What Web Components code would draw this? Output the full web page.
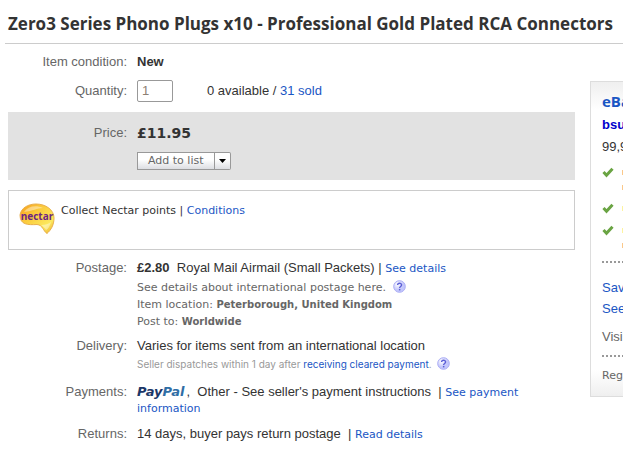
<!DOCTYPE html>
<html lang="en">
<head>
<meta charset="utf-8">
<title>Zero3 Series Phono Plugs x10</title>
<style>
html { overflow-x: hidden; }
body { margin: 0; background: #fff; color: #333; font: 13px/16px "Liberation Sans", Arial, sans-serif; }
</style>
</head>
<body>
<item-page></item-page>
<script>
const define = (name, html, setup) => {
  const t = document.createElement('template');
  t.innerHTML = html;
  customElements.define(name, class extends HTMLElement {
    constructor() {
      super();
      this.attachShadow({ mode: 'open' }).append(t.content.cloneNode(true));
    }
    connectedCallback() { if (setup) setup(this, this.shadowRoot); }
  });
};

define('item-row', `
<style>
:host { display: grid; grid-template-columns: 119px 1fr; column-gap: 10px; }
.label { text-align: right; color: #666; line-height: var(--label-height, 16px); }
</style>
<div class="label"><slot name="label"></slot></div>
<div><slot></slot></div>`);

define('text-link', `
<style>
:host { display: inline; }
a { color: #1a56c4; text-decoration: none; }
</style>
<a href="#"><slot></slot></a>`);

define('help-icon', `
<style>
:host { display: inline-block; vertical-align: -2px; margin-left: 4px; }
a, svg { display: block; }
</style>
<a href="#" aria-label="Help"><svg width="13" height="13" viewBox="0 0 13 13">
<defs><radialGradient id="g" cx=".35" cy=".3"><stop offset="0" stop-color="#fff"/><stop offset="1" stop-color="#c3c6fb"/></radialGradient></defs>
<circle cx="6.5" cy="6.5" r="5.8" fill="url(#g)" stroke="#a9abf5"/>
<path d="M4.6 5.1c0-2.5 4-2.5 4 0 0 1.4-2 1.4-2 3" fill="none" stroke="#5c5fd6" stroke-width="1.4"/><rect x="5.9" y="8.9" width="1.5" height="1.5" fill="#5c5fd6"/></svg></a>`);

define('nectar-logo', `
<style>:host { display: block; } svg { display: block; }
text { font: bold 10px "Open Sans", sans-serif; fill: #6b2583; }</style>
<svg width="36" height="32" viewBox="0 0 36 32">
<defs><linearGradient id="n" x1="0" y1="0" x2="1" y2="1"><stop offset="0" stop-color="#f59a1c"/><stop offset=".35" stop-color="#fbc93a"/><stop offset=".75" stop-color="#fce95e"/><stop offset="1" stop-color="#eda929"/></linearGradient></defs>
<path d="M1 12C2 5 9 1 17 1c10 0 18 6 18 14 0 7-3 12-7 15.500C24 28 24 22 18 21.500 9 22 1 22 1 12Z" fill="url(#n)" stroke="#e9b04c"/>
<path d="M5 9C9 3 17 2 24 5 18 5 14 8 5 9ZM22 22c4 0 8-1 10-3-1 4-3 7-5 8-1-2-3-4-5-5Z" fill="#fff" opacity=".4"/>
<text x="18" y="17" text-anchor="middle">nectar</text></svg>`);

define('paypal-logo', `
<style>:host { display: inline-block; margin-right: 2px; font: italic bold 13px/12px "DejaVu Sans", Verdana, sans-serif; color: #1c3768; }
span { color: #2f6ea5; }</style>Pay<span>Pal</span>`);

define('split-button', `
<style>
:host { display: inline-flex; vertical-align: top; }
button { box-sizing: border-box; height: 18px; margin: 0; padding: 0 10px; border: 1px solid #999; background: linear-gradient(#fff 40%, #dcdee2); color: #666; font: 11px/14px "DejaVu Sans", Verdana, sans-serif; }
.more { width: 16px; padding: 0; border-left: 0; border-radius: 0 2px 2px 0; display: grid; place-items: center; }
</style>
<button><slot></slot></button><button class="more" aria-label="More options"><svg width="7" height="4"><path d="M0 0h7L3.500 4z" fill="#000"/></svg></button>`);

define('nectar-box', `
<style>
:host { display: flex; box-sizing: border-box; min-height: 60px; margin: 10px 0; padding: 12px 10px; border: 1px solid #ccc; gap: 6px; font: 11px/16px "DejaVu Sans", Verdana, sans-serif; }
</style>
<nectar-logo></nectar-logo><div><slot></slot></div>`);

define('check-line', `
<style>
:host { display: flex; justify-content: space-between; }
svg { margin-top: 3px; }
.edge { width: 1px; display: grid; gap: 10px; align-content: start; padding-top: 6px; }
i { height: 5px; background: #fdf3a0; }
:host([tone=orange]) i, i + i { background: #fbc88a; }
</style>
<svg width="12" height="11" viewBox="0 0 12 11"><path d="M1.500 5 4.500 8.200 10.500 1.800" fill="none" stroke="#6aa443" stroke-width="3"/></svg><div class="edge"><i></i></div>`,
(el, root) => {
  if (el.hasAttribute('double')) root.querySelector('.edge').append(document.createElement('i'));
});

define('seller-panel', `
<style>
:host { display: block; box-sizing: border-box; overflow: hidden; white-space: nowrap; border: 1px solid #ddd; border-right: 0; padding: 10px 0 12px 11px; background: linear-gradient(#efefef, #fff 28px, #fff 288px, #efefef); }
h2 { margin: 0; font: bold 15px/18px "Open Sans", sans-serif; color: #1a56c4; }
.name { line-height: 16px; margin: 7px 0 6px; font-weight: bold; }
.name a { color: #0000cc; text-decoration: none; }
.checks { display: grid; grid-template-rows: 36px 22px 20px; margin-top: 9px; }
hr { margin: 19px 0 17px; border: 0; height: 2px; background: repeating-linear-gradient(90deg, #999 0 2px, transparent 2px 4px); }
.links { display: grid; gap: 5px; }
.visit { margin-top: 12px; color: #666; }
.visit + hr { margin: 10px 0 11px; }
.reg { font: 11px/16px "DejaVu Sans", Verdana, sans-serif; color: #666; }
</style>
<h2>eBa</h2>
<div class="name"><a href="#">bsu</a></div>
<div>99,9</div>
<div class="checks"><check-line tone="orange" double></check-line><check-line></check-line><check-line double></check-line></div>
<hr>
<div class="links"><text-link>Sav</text-link><text-link>See</text-link></div>
<div class="visit">Visi</div>
<hr>
<div class="reg">Reg</div>`);

define('item-page', `
<style>
:host { display: block; }
h1 { margin: 0 0 0 5px; padding: 12px 0 7px 3px; border-bottom: 1px solid #ccc; font: bold 17px/24px "Open Sans", "Trebuchet MS", sans-serif; white-space: nowrap; }
.cols { display: grid; grid-template-columns: minmax(0, 1fr) 33px; column-gap: 15px; align-items: start; padding: 10px 0 0 8px; }
seller-panel { margin-top: 27px; }
.qty { --label-height: 22px; margin: 10px 0; line-height: 22px; }
.qty > div { display: flex; gap: 34px; }
input { box-sizing: border-box; width: 36px; height: 22px; padding: 0 4px; border: 1px solid #999; border-radius: 2px; color: #8c8073; font: inherit; }
.price { background: #e2e2e2; padding: 12px 0 10px; --label-height: 18px; }
.amount { font: bold 14px/18px "DejaVu Sans", sans-serif; margin-bottom: 10px; }
small { display: block; font: 11px/17px "DejaVu Sans", Verdana, sans-serif; color: #666; }
small b { font-size: 10px; line-height: 12px; }
.s { font: 11px/12px "DejaVu Sans", Verdana, sans-serif; }
.post { margin-bottom: 8px; }
.post small:first-of-type { margin-top: 3px; }
.delivery { margin-bottom: 12px; }
.delivery small { font: 10px/16px Inter, sans-serif; color: #999; margin-top: 2px; }
.delivery help-icon { margin-left: 0; }
.pay { margin-bottom: 10px; }
</style>
<h1>Zero3 Series Phono Plugs x10 - Professional Gold Plated RCA Connectors</h1>
<div class="cols">
<main>
<item-row><span slot="label">Item condition:</span><b>New</b></item-row>
<item-row class="qty"><label slot="label" for="q">Quantity:</label><div><input id="q" value="1"><span>0 available / <text-link>31 sold</text-link></span></div></item-row>
<item-row class="price"><span slot="label">Price:</span><div class="amount">£11.95</div><split-button>Add to list</split-button></item-row>
<nectar-box>Collect Nectar points | <text-link>Conditions</text-link></nectar-box>
<item-row class="post"><span slot="label">Postage:</span><div><b>£2.80</b>&nbsp; Royal Mail Airmail (Small Packets) | <text-link class="s">See details</text-link></div>
<small>See details about international postage here. <help-icon></help-icon></small><small>Item location: <b>Peterborough, United Kingdom</b></small><small>Post to: <b>Worldwide</b></small></item-row>
<item-row class="delivery"><span slot="label">Delivery:</span><div>Varies for items sent from an international location</div><small>Seller dispatches within 1 day after <text-link>receiving cleared payment</text-link>. &nbsp;<help-icon></help-icon></small></item-row>
<item-row class="pay"><span slot="label">Payments:</span><paypal-logo></paypal-logo>,&nbsp; Other - See seller's payment instructions &nbsp;| <text-link class="s">See payment information</text-link></item-row>
<item-row><span slot="label">Returns:</span>14 days, buyer pays return postage &nbsp;| <text-link class="s">Read details</text-link></item-row>
</main>
<seller-panel></seller-panel>
</div>`);
</script>
</body>
</html>
